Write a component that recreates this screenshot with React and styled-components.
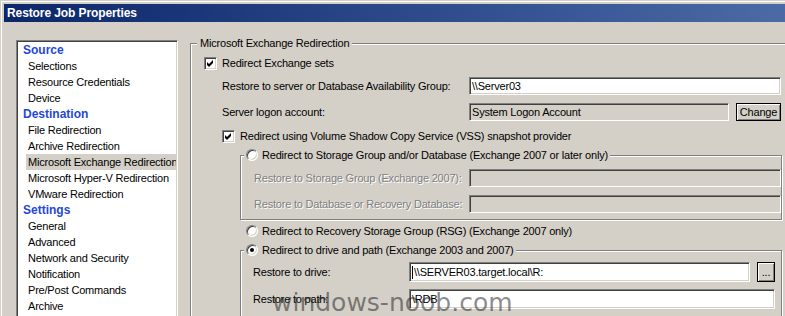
import React from 'react';
import styled, { createGlobalStyle } from 'styled-components';

const GlobalStyle = createGlobalStyle`
  html, body {
    margin: 0;
    padding: 0;
    background: #d4d0c8;
  }
  body {
    font-family: "Liberation Sans", Arial, sans-serif;
    font-size: 11px;
    letter-spacing: -0.2px;
    color: #000;
  }
`;

const navItems = [
  { type: 'header', label: 'Source' },
  { label: 'Selections' },
  { label: 'Resource Credentials' },
  { label: 'Device' },
  { type: 'header', label: 'Destination' },
  { label: 'File Redirection' },
  { label: 'Archive Redirection' },
  { label: 'Microsoft Exchange Redirection', active: true },
  { label: 'Microsoft Hyper-V Redirection' },
  { label: 'VMware Redirection' },
  { type: 'header', label: 'Settings' },
  { label: 'General' },
  { label: 'Advanced' },
  { label: 'Network and Security' },
  { label: 'Notification' },
  { label: 'Pre/Post Commands' },
  { label: 'Archive' },
];

const CheckBox = ({ checked }) => (
  <CheckFrame>
    {checked && (
      <svg width="7" height="7" viewBox="0 0 7 7">
        <path d="M0 2 L2 4 L6 0 L6 3 L2 7 L0 5 Z" fill="#000" />
      </svg>
    )}
  </CheckFrame>
);

const Radio = ({ checked }) => (
  <RadioFrame>{checked && <RadioDot />}</RadioFrame>
);

const App = () => {
  return (
    <>
      <GlobalStyle />
      <Window>
        <TitleBar>Restore Job Properties</TitleBar>
        <Body>
          <Sidebar>
            {navItems.map((item, index) =>
              item.type === 'header' ? (
                <NavHeader key={index}>{item.label}</NavHeader>
              ) : (
                <NavItem key={index} $active={item.active}>
                  {item.label}
                </NavItem>
              )
            )}
          </Sidebar>

          <Panel>
            <GroupBox $width={700} $pt={11} $pl={13} $pb={40}>
              <Caption $left={6}>Microsoft Exchange Redirection</Caption>

              <OptionRow $mt={0} $indent={0}>
                <CheckBox checked />
                <span>Redirect Exchange sets</span>
              </OptionRow>

              <FieldRow $mt={6} $indent={18}>
                <Label $width={247}>Restore to server or Database Availability Group:</Label>
                <Field $width={312} $height={18}>\\Server03</Field>
              </FieldRow>

              <FieldRow $mt={8} $indent={18}>
                <Label $width={247}>Server logon account:</Label>
                <Field $width={260} $height={18} $disabled>System Logon Account</Field>
                <Button $width={45} $height={18}>Change</Button>
              </FieldRow>

              <OptionRow $mt={7} $indent={18}>
                <CheckBox checked />
                <span>Redirect using Volume Shadow Copy Service (VSS) snapshot provider</span>
              </OptionRow>

              <SubGroup $width={542} $mt={11} $pt={13} $pl={13} $pb={6}>
                <Caption $left={3} $radio>
                  <Radio />
                  <span>Redirect to Storage Group and/or Database (Exchange 2007 or later only)</span>
                </Caption>
                <FieldRow $mt={0} $indent={0}>
                  <Label $width={215} $disabled>Restore to Storage Group (Exchange 2007):</Label>
                  <Field $width={312} $height={18} $disabled />
                </FieldRow>
                <FieldRow $mt={8} $indent={0}>
                  <Label $width={215} $disabled>Restore to Database or Recovery Database:</Label>
                  <Field $width={312} $height={18} $disabled />
                </FieldRow>
              </SubGroup>

              <OptionRow $mt={4} $indent={42} $radio>
                <Radio />
                <span>Redirect to Recovery Storage Group (RSG) (Exchange 2007 only)</span>
              </OptionRow>

              <SubGroup $width={542} $mt={12} $pt={11} $pl={12} $pb={10}>
                <Caption $left={3} $radio>
                  <Radio checked />
                  <span>Redirect to drive and path (Exchange 2003 and 2007)</span>
                </Caption>
                <FieldRow $mt={0} $indent={0}>
                  <Label $width={156}>Restore to drive:</Label>
                  <Field $width={341} $height={20}>
                    <Caret />\\SERVER03.target.local\R:
                  </Field>
                  <Button $width={18} $height={20}>...</Button>
                </FieldRow>
                <FieldRow $mt={7} $indent={0}>
                  <Label $width={156}>Restore to path:</Label>
                  <Field $width={366} $height={20}>\RDB</Field>
                </FieldRow>
              </SubGroup>
            </GroupBox>
          </Panel>
        </Body>
        <Watermark>windows-noob.com</Watermark>
      </Window>
    </>
  );
};

const Window = styled.div`
  position: relative;
  width: 785px;
  height: 316px;
  overflow: hidden;
  box-sizing: border-box;
  padding: 4px 0 0 4px;
  background: #d4d0c8;
  box-shadow: inset 1px 1px 0 #d4d0c8, inset 2px 2px 0 #fff;
  display: flex;
  flex-direction: column;
`;

const TitleBar = styled.div`
  flex: none;
  height: 18px;
  display: flex;
  align-items: center;
  padding-left: 3px;
  background: linear-gradient(90deg, #0c266a 0%, #4a6ba6 100%);
  color: #fff;
  font-weight: bold;
  font-size: 12px;
  letter-spacing: -0.1px;
`;

const Body = styled.div`
  display: flex;
  flex: 1;
  min-height: 0;
`;

const Sidebar = styled.div`
  flex: none;
  width: 162px;
  height: 300px;
  margin: 18px 0 0 12px;
  box-sizing: border-box;
  padding: 1px 1px 0 1px;
  background: #fff;
  border: 1px solid;
  border-color: #808080 #fff #fff #808080;
  box-shadow: inset 1px 1px 0 #404040, inset -1px -1px 0 #d4d0c8;
  overflow: hidden;
`;

const NavHeader = styled.div`
  height: 16px;
  line-height: 16px;
  padding-left: 5px;
  font-size: 12px;
  font-weight: bold;
  letter-spacing: 0;
  color: #1f48d8;
`;

const NavItem = styled.div`
  height: 16px;
  line-height: 16px;
  margin-left: 8px;
  padding-left: 2px;
  white-space: nowrap;
  overflow: hidden;
  background: ${(p) => (p.$active ? '#d4d0c8' : 'transparent')};
`;

const Panel = styled.div`
  flex: 1;
  min-width: 0;
  padding: 21px 0 0 12px;
`;

const GroupBox = styled.div`
  position: relative;
  flex: none;
  width: ${(p) => p.$width}px;
  box-sizing: border-box;
  margin-top: ${(p) => p.$mt || 0}px;
  margin-left: ${(p) => p.$ml || 0}px;
  padding: ${(p) => p.$pt}px 0 ${(p) => p.$pb}px ${(p) => p.$pl}px;
  border: 1px solid #808080;
  box-shadow: inset 1px 1px 0 #fff, 1px 1px 0 #fff;
`;

const SubGroup = styled(GroupBox)`
  margin-left: 36px;
`;

const Caption = styled.div`
  position: absolute;
  top: -8px;
  left: ${(p) => p.$left}px;
  display: flex;
  align-items: center;
  gap: 4px;
  height: 14px;
  line-height: 14px;
  padding: 0 ${(p) => (p.$radio ? 2 : 3)}px;
  background: #d4d0c8;
  white-space: nowrap;
`;

const OptionRow = styled.div`
  display: flex;
  align-items: center;
  gap: ${(p) => (p.$radio ? 4 : 5)}px;
  height: ${(p) => (p.$radio ? 14 : 16)}px;
  margin-top: ${(p) => p.$mt}px;
  margin-left: ${(p) => p.$indent}px;
  white-space: nowrap;
`;

const CheckFrame = styled.span`
  flex: none;
  width: 13px;
  height: 13px;
  box-sizing: border-box;
  display: flex;
  align-items: center;
  justify-content: center;
  background: #fff;
  border: 1px solid;
  border-color: #808080 #fff #fff #808080;
  box-shadow: inset 1px 1px 0 #404040, inset -1px -1px 0 #d4d0c8;
`;

const RadioFrame = styled.span`
  flex: none;
  width: 12px;
  height: 12px;
  box-sizing: border-box;
  display: flex;
  align-items: center;
  justify-content: center;
  border-radius: 50%;
  background: #fff;
  border: 1px solid;
  border-color: #808080 #fff #fff #808080;
  box-shadow: inset 1px 1px 0 #404040, inset -1px -1px 0 #d4d0c8;
`;

const RadioDot = styled.span`
  width: 4px;
  height: 4px;
  border-radius: 50%;
  background: #000;
`;

const FieldRow = styled.div`
  display: flex;
  align-items: center;
  margin-top: ${(p) => p.$mt}px;
  margin-left: ${(p) => p.$indent}px;
  gap: 7px;
`;

const Label = styled.div`
  flex: none;
  width: ${(p) => p.$width}px;
  margin-right: -7px;
  white-space: nowrap;
  color: ${(p) => (p.$disabled ? '#808080' : '#000')};
  text-shadow: ${(p) => (p.$disabled ? '1px 1px 0 #fff' : 'none')};
`;

const Field = styled.div`
  flex: none;
  width: ${(p) => p.$width}px;
  height: ${(p) => p.$height}px;
  box-sizing: border-box;
  display: flex;
  align-items: center;
  padding-left: 2px;
  white-space: nowrap;
  overflow: hidden;
  background: ${(p) => (p.$disabled ? '#d4d0c8' : '#fff')};
  border: 1px solid;
  border-color: #808080 #fff #fff #808080;
  box-shadow: inset 1px 1px 0 #404040, inset -1px -1px 0 #d4d0c8;
`;

const Caret = styled.span`
  display: inline-block;
  width: 1px;
  height: 13px;
  margin-right: 1px;
  background: #000;
`;

const Button = styled.div`
  flex: none;
  width: ${(p) => p.$width}px;
  height: ${(p) => p.$height}px;
  box-sizing: border-box;
  display: flex;
  align-items: center;
  justify-content: center;
  background: #d4d0c8;
  border: 1px solid #000;
  box-shadow: inset 1px 1px 0 #fff, inset -1px -1px 0 #808080;
`;

const Watermark = styled.div`
  position: absolute;
  left: 272px;
  top: 288px;
  font-family: "DejaVu Sans", Verdana, sans-serif;
  font-size: 25px;
  line-height: 30px;
  letter-spacing: 0;
  color: rgba(40, 40, 40, 0.55);
  white-space: nowrap;
  pointer-events: none;
`;

export default App;
